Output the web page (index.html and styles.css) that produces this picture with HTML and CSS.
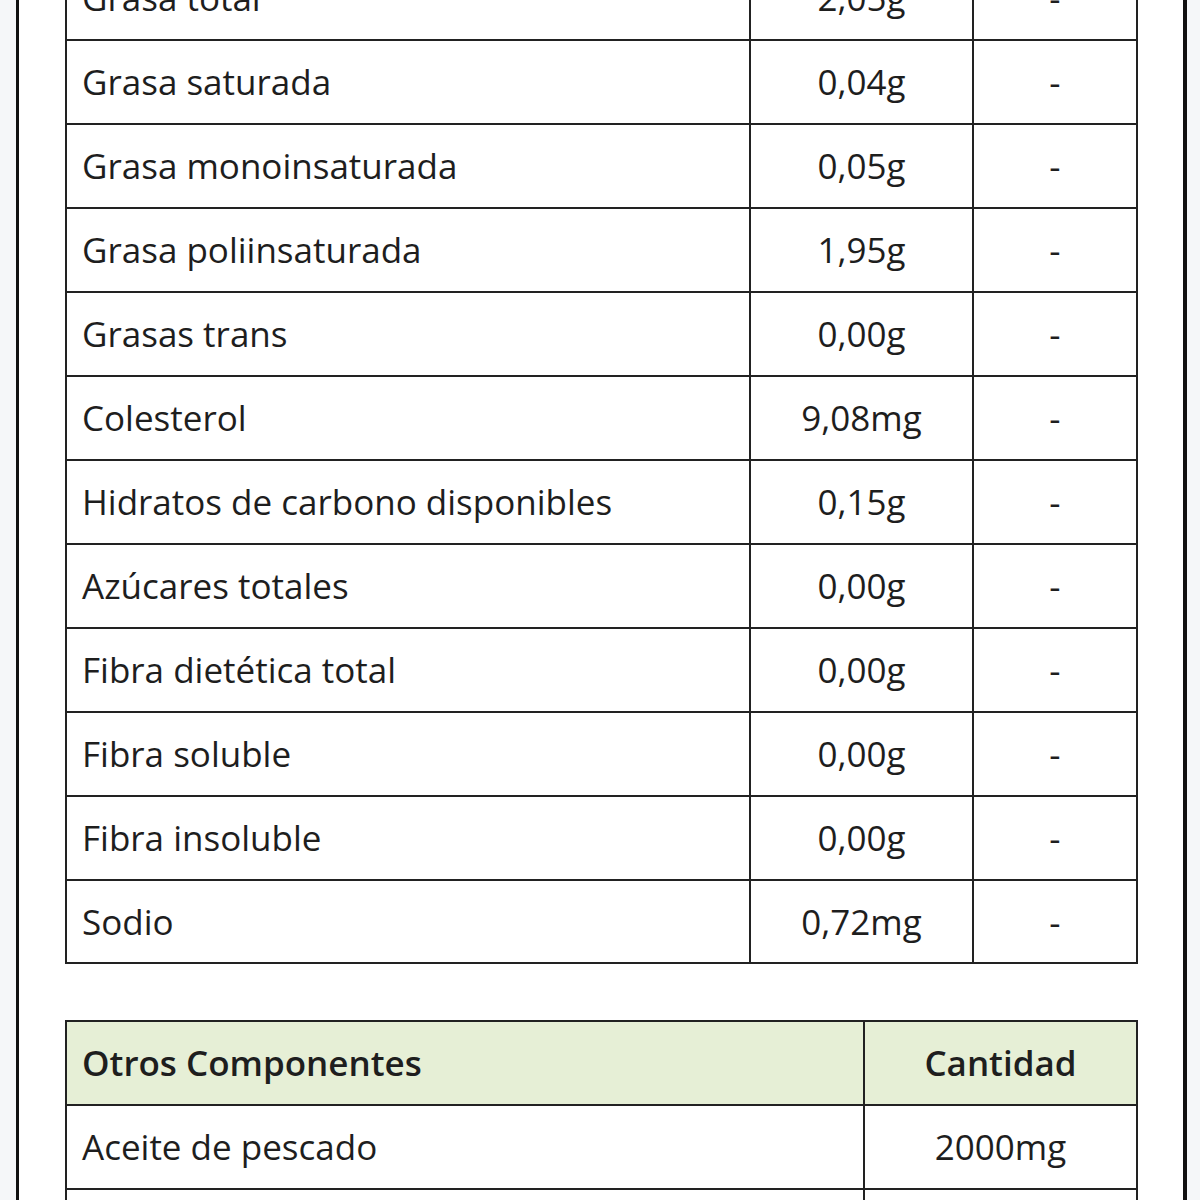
FILE: index.html
```html
<!DOCTYPE html>
<html lang="es">
<head>
<meta charset="utf-8">
<title>Información nutricional</title>
<link rel="stylesheet" href="styles.css">
</head>
<body>
<div class="frame">
  <table class="tbl nutri">
    <colgroup><col class="c1"><col class="c2"><col class="c3"></colgroup>
    <tbody>
      <tr><td>Grasa total</td><td class="num">2,05g</td><td class="num">-</td></tr>
      <tr><td>Grasa saturada</td><td class="num">0,04g</td><td class="num">-</td></tr>
      <tr><td>Grasa monoinsaturada</td><td class="num">0,05g</td><td class="num">-</td></tr>
      <tr><td>Grasa poliinsaturada</td><td class="num">1,95g</td><td class="num">-</td></tr>
      <tr><td>Grasas trans</td><td class="num">0,00g</td><td class="num">-</td></tr>
      <tr><td>Colesterol</td><td class="num">9,08mg</td><td class="num">-</td></tr>
      <tr><td>Hidratos de carbono disponibles</td><td class="num">0,15g</td><td class="num">-</td></tr>
      <tr><td>Azúcares totales</td><td class="num">0,00g</td><td class="num">-</td></tr>
      <tr><td>Fibra dietética total</td><td class="num">0,00g</td><td class="num">-</td></tr>
      <tr><td>Fibra soluble</td><td class="num">0,00g</td><td class="num">-</td></tr>
      <tr><td>Fibra insoluble</td><td class="num">0,00g</td><td class="num">-</td></tr>
      <tr><td>Sodio</td><td class="num">0,72mg</td><td class="num">-</td></tr>
    </tbody>
  </table>

  <table class="tbl otros">
    <colgroup><col class="o1"><col class="o2"></colgroup>
    <thead>
      <tr><th>Otros Componentes</th><th class="num">Cantidad</th></tr>
    </thead>
    <tbody>
      <tr><td>Aceite de pescado</td><td class="num">2000mg</td></tr>
      <tr><td>&nbsp;</td><td class="num">&nbsp;</td></tr>
    </tbody>
  </table>
</div>
</body>
</html>
```

FILE: styles.css
```css
html, body {
  margin: 0;
  padding: 0;
  background: #f5f7f9;
}

body {
  font-family: "Open Sans", "Liberation Sans", sans-serif;
  color: #1e1e1e;
  overflow: hidden;
}

.frame {
  margin: 0 13px 0 16px;
  border-left: 3px solid #111;
  border-right: 4px solid #111;
  background: #fff;
  padding: 0 46px 0 46px;
  min-height: 1300px;
  display: flow-root;
}

.tbl {
  width: 1073px;
  border-collapse: separate;
  border-spacing: 0;
  border: 2px solid #222;
  table-layout: fixed;
  font-size: 35px;
}

.nutri {
  margin-top: -45px;
}

.otros {
  margin-top: 56px;
}

.c1 { width: 682px; }
.c2 { width: 223px; }
.c3 { width: 164px; }

.o1 { width: 796px; }
.o2 { width: 273px; }

.tbl td,
.tbl th {
  height: 84px;
  box-sizing: border-box;
  padding: 0 15px;
  text-align: left;
  vertical-align: middle;
  border-bottom: 2px solid #222;
  line-height: 1.2;
  font-weight: 400;
  white-space: nowrap;
}

.nutri tr:last-child td {
  height: 81px;
  border-bottom: none;
}

.tbl td + td,
.tbl th + th {
  border-left: 2px solid #222;
}

.tbl .num {
  text-align: center;
}

.otros th {
  background: #e6efd6;
  font-weight: 650;
}
```
